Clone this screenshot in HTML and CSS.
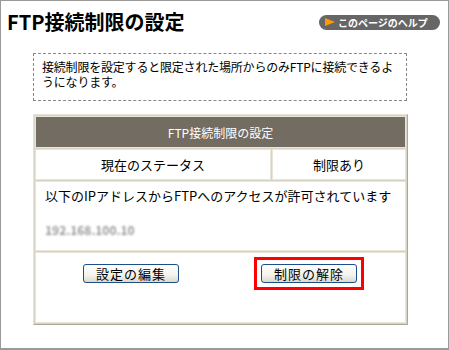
FILE: index.html
```html
<!DOCTYPE html>
<html>
<head>
<meta http-equiv="Content-Type" content="text/html; charset=utf-8"/>
<title>FTP接続制限の設定</title>
<link rel="stylesheet" href="styles.css">
</head>
<body>
<div class="frame">
  <div class="head">
    <h1>FTP接続制限の設定</h1>
    <a class="help" href="#"><svg width="10" height="8" viewBox="0 0 10 8"><polygon points="0,0 10,4 0,8" fill="#f90"/></svg>このページのヘルプ</a>
  </div>

  <div class="note">接続制限を設定すると限定された場所からのみFTPに接続できるようになります。</div>

  <table class="setting">
    <tr>
      <th colspan="2">FTP接続制限の設定</th>
    </tr>
    <tr class="status">
      <td class="label">現在のステータス</td>
      <td class="value">制限あり</td>
    </tr>
    <tr>
      <td colspan="2" class="allow">
        <p>以下のIPアドレスからFTPへのアクセスが許可されています</p>
        <p class="ip">192.168.100.10</p>
      </td>
    </tr>
    <tr>
      <td colspan="2" class="actions">
        <div class="buttons">
          <span class="slot"><button class="btn">設定の編集</button></span>
          <span class="slot mark"><button class="btn">制限の解除</button></span>
        </div>
      </td>
    </tr>
  </table>
</div>
</body>
</html>
```

FILE: styles.css
```css
body {
  margin: 0;
  background-color: white;
  font-family: "Noto Sans CJK JP", "Noto Sans", sans-serif;
  font-size: 12px;
  color: #000;
}

.frame {
  width: 449px;
  height: 350px;
  box-sizing: border-box;
  border: 1px solid #999;
  border-width: 1px 1px 2px 1px;
}

.head {
  display: flex;
  justify-content: space-between;
  align-items: center;
  padding: 0 8px 0 6px;
  height: 44px;
}

h1 {
  margin: 0;
  font-size: 20px;
  font-weight: bold;
  line-height: 24px;
  margin-top: -2px;
}

.help {
  display: flex;
  align-items: center;
  gap: 3px;
  height: 15px;
  width: 121px;
  box-sizing: border-box;
  padding-left: 6px;
  margin-top: -2px;
  background-color: #666;
  border-radius: 8px;
  color: white;
  font-size: 10px;
  font-weight: bold;
  text-decoration: none;
  white-space: nowrap;
}

.note {
  margin: 8px 0 0 32px;
  width: 374px;
  height: 48px;
  box-sizing: border-box;
  border: 1px dashed #888;
  padding: 5px 8px 0 8px;
  line-height: 15px;
  letter-spacing: -0.2px;
}

.setting {
  margin: 13px 0 0 32px;
  width: 375px;
  border-collapse: separate;
  border-spacing: 1px;
  border: 1px solid #aca899;
  border-color: #e6e3d6 #aca899 #aca899 #e6e3d6;
  background-color: #d8d4c4;
}

.setting th,
.setting td {
  background-color: white;
  border: 1px solid #e8e5d8;
  padding: 0;
}

.setting th {
  background-color: #736c63;
  color: white;
  font-weight: normal;
  height: 30px;
}

.status td {
  height: 29px;
  text-align: center;
  font-size: 13px;
}

.status .label {
  width: 234px;
}

.allow {
  height: 64px;
  vertical-align: top;
  padding: 4px 9px 0 9px !important;
}

.allow p {
  margin: 0;
  line-height: 20px;
  font-size: 13px;
}

.ip {
  margin-top: 14px !important;
  color: #999;
  filter: blur(1.2px);
  font-weight: bold;
  font-size: 12px !important;
}

.actions {
  height: 69px;
  vertical-align: top;
}

.buttons {
  display: flex;
  padding-top: 4px;
}

.slot {
  display: inline-block;
  border: 3px solid transparent;
  padding: 4px 4px;
}

.slot:first-child {
  margin-left: 40px;
}

.slot.mark {
  margin-left: 68px;
  border-color: #f00;
}

.btn {
  display: block;
  width: 96px;
  height: 19px;
  padding: 0;
  border: 1px solid #1c4e8a;
  border-radius: 3px;
  background: linear-gradient(#ffffff, #f3f2ec 60%, #dcd9cc);
  font-family: "Noto Sans CJK JP", sans-serif;
  font-size: 13px;
  letter-spacing: 1px;
  line-height: 16px;
  color: #000;
}
```
